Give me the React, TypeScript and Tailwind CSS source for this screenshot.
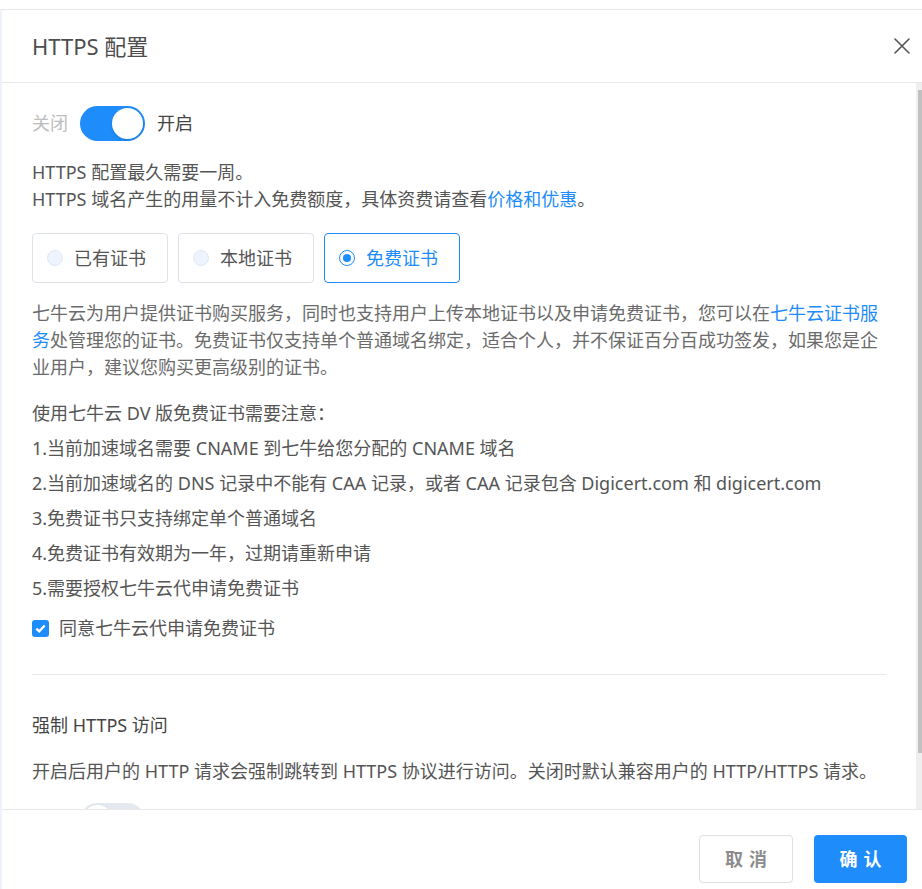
import { useState } from "react";

const font = { fontFamily: '"Noto Sans", "Noto Sans CJK SC", sans-serif' };

function Toggle({ on }: { on: boolean }) {
  return (
    <div className="flex items-center gap-[12px]">
      <span className={on ? "text-[#bdbdbd]" : "text-[#555]"}>关闭</span>
      <div
        className={`flex h-[35px] w-[65px] items-center rounded-full p-[2px] ${
          on ? "justify-end bg-[#1e8cfa]" : "justify-start bg-[#e4e8ef]"
        }`}
      >
        <div className="h-[31px] w-[31px] rounded-full bg-white shadow-sm" />
      </div>
      <span className={on ? "text-[#444]" : "text-[#bdbdbd]"}>开启</span>
    </div>
  );
}

function RadioCard({ label, checked }: { label: string; checked?: boolean }) {
  return (
    <div
      className={`flex h-[50px] w-[136px] items-center gap-[11px] rounded-[4px] border px-[14px] ${
        checked ? "border-[#1e8cfa] text-[#1e8cfa]" : "border-[#dde1e8] text-[#555]"
      }`}
    >
      {checked ? (
        <span className="flex h-[16px] w-[16px] items-center justify-center rounded-full border border-[#1e8cfa] bg-white">
          <span className="h-[8px] w-[8px] rounded-full bg-[#1e8cfa]" />
        </span>
      ) : (
        <span className="h-[16px] w-[16px] rounded-full border border-[#e1e8f3] bg-[#eef4fd]" />
      )}
      <span>{label}</span>
    </div>
  );
}

export default function App() {
  const [agree] = useState(true);
  const notes = [
    "1.当前加速域名需要 CNAME 到七牛给您分配的 CNAME 域名",
    "2.当前加速域名的 DNS 记录中不能有 CAA 记录，或者 CAA 记录包含 Digicert.com 和 digicert.com",
    "3.免费证书只支持绑定单个普通域名",
    "4.免费证书有效期为一年，过期请重新申请",
    "5.需要授权七牛云代申请免费证书",
  ];

  return (
    <div className="h-[889px] overflow-hidden bg-white pt-[9px] text-[18px] text-[#555]" style={font}>
      <div className="flex flex-col border-l-2 border-t border-l-[#eef2fa] border-t-[#e6e8ec] bg-white">
        {/* header */}
        <div className="flex h-[73px] items-center justify-between border-b border-[#e8e8e8] pl-[30px] pr-[11px]">
          <h1 className="text-[22px] text-[#4d4d4d]">HTTPS 配置</h1>
          <svg width="16" height="16" viewBox="0 0 16 16" className="mr-[1px]">
            <path d="M1 1L15 15M15 1L1 15" stroke="#555" strokeWidth="1.6" strokeLinecap="round" />
          </svg>
        </div>

        {/* body + scrollbar */}
        <div className="flex h-[726px]">
          <div className="flex-1 overflow-hidden pl-[30px] pr-[29px]">
            <div className="pb-[23px] pt-[23px]">
              <Toggle on />

              <div className="mt-[18px] leading-[27px]">
                <p>HTTPS 配置最久需要一周。</p>
                <p>
                  HTTPS 域名产生的用量不计入免费额度，具体资费请查看
                  <a className="text-[#1e8cfa]">价格和优惠</a>。
                </p>
              </div>

              <div className="mt-[20px] flex gap-[10px]">
                <RadioCard label="已有证书" />
                <RadioCard label="本地证书" />
                <RadioCard label="免费证书" checked />
              </div>

              <p className="mt-[17px] leading-[27px] text-[#6b6b6b]">
                七牛云为用户提供证书购买服务，同时也支持用户上传本地证书以及申请免费证书，您可以在
                <a className="text-[#1e8cfa]">七牛云证书服务</a>
                处管理您的证书。免费证书仅支持单个普通域名绑定，适合个人，并不保证百分百成功签发，如果您是企业用户，建议您购买更高级别的证书。
              </p>

              <div className="mt-[15px] leading-[35px]">
                <p>使用七牛云 DV 版免费证书需要注意：</p>
                {notes.map((n) => (
                  <p key={n}>{n}</p>
                ))}
              </div>

              <label className="mt-[5px] flex h-[35px] items-center gap-[10px]">
                <span className="flex h-[17px] w-[17px] items-center justify-center rounded-[3px] bg-[#1e8cfa]">
                  {agree && (
                    <svg width="11" height="9" viewBox="0 0 11 9">
                      <path d="M1.3 4.6L4.2 7.3L9.7 1.5" fill="none" stroke="#fff" strokeWidth="2.4" />
                    </svg>
                  )}
                </span>
                <span>同意七牛云代申请免费证书</span>
              </label>

              <div className="mt-[28px] border-t border-[#e8e9ed]" />

              <h2 className="mt-[37px] leading-[27px] text-[#444]">强制 HTTPS 访问</h2>
              <p className="mt-[19px] leading-[27px]">
                开启后用户的 HTTP 请求会强制跳转到 HTTPS 协议进行访问。关闭时默认兼容用户的 HTTP/HTTPS 请求。
              </p>
              <div className="mt-[18px]">
                <Toggle on={false} />
              </div>
            </div>
          </div>
          {/* scrollbar */}
          <div className="flex w-[6px] justify-end bg-[#efefef] pt-[7px]">
            <div className="h-[663px] w-[4px] bg-[#c1c1c1]" />
          </div>
        </div>

        {/* footer */}
        <div className="flex h-[100px] justify-end gap-[21px] border-t border-[#e8e8e8] pr-[15px] pt-[25px]">
          <button className="h-[48px] w-[94px] rounded-[4px] border border-[#dcdfe6] bg-white pl-[6px] font-semibold tracking-[6px] text-[#8c8c8c]">
            取消
          </button>
          <button className="h-[48px] w-[93px] rounded-[4px] bg-[#1e8cfa] pl-[6px] font-semibold tracking-[6px] text-white">
            确认
          </button>
        </div>
      </div>
    </div>
  );
}
